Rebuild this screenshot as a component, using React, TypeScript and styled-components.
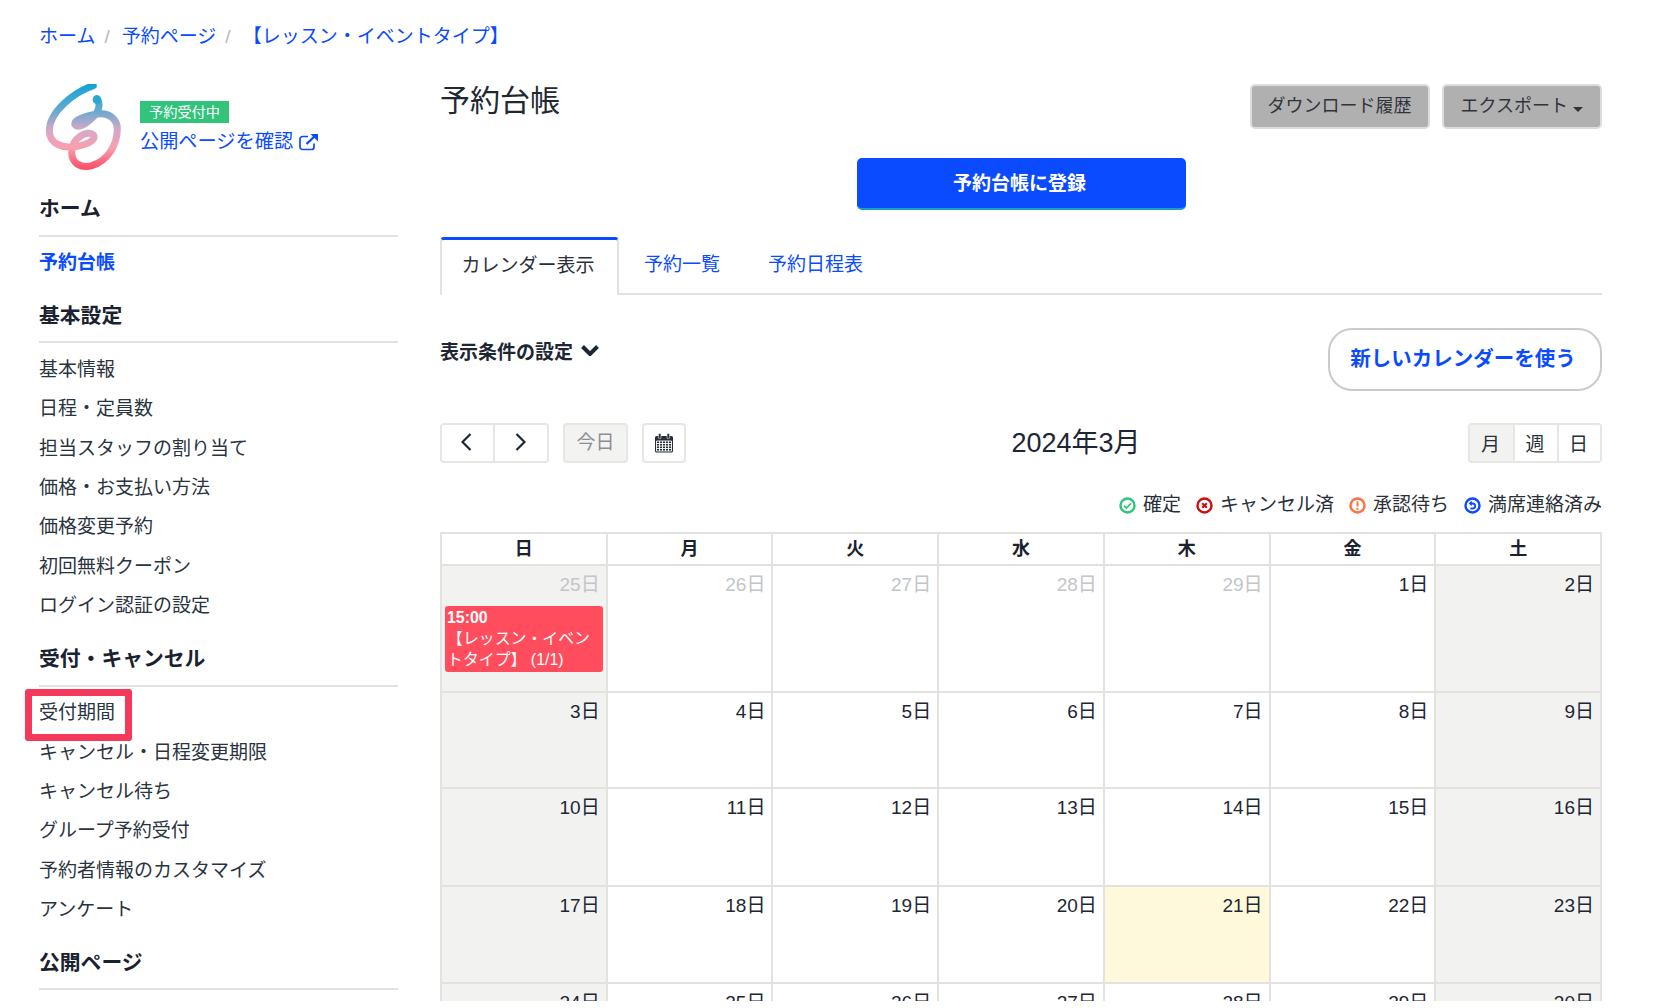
import React from 'react';
import styled, { createGlobalStyle } from 'styled-components';

const GlobalStyle = createGlobalStyle`
  * { box-sizing: border-box; }
  html, body { margin: 0; padding: 0; background: #fff; }
  body {
    font-family: "Liberation Sans", "Noto Sans CJK JP", sans-serif;
    font-size: 19px;
    color: #1d2634;
  }
`;

const BLUE = '#0a4bff';
const LINE = '#e2e2de';

const Page = styled.div`
  width: 1660px;
  height: 1001px;
  overflow: hidden;
  padding: 0 58px 0 39px;
`;

const Breadcrumb = styled.nav`
  height: 84px;
  padding-top: 23px;
  display: flex;
  line-height: 28px;
  color: ${BLUE};
`;

const Crumb = styled.a`
  color: ${BLUE};
`;

const Slash = styled.span`
  color: #b8b8b8;
  margin: 0 12px 0 9px;
  font-size: 19px;
`;

const Columns = styled.div`
  display: flex;
  gap: 42px;
  align-items: flex-start;
`;

const Sidebar = styled.aside`
  width: 359px;
  flex: none;
`;

const Brand = styled.div`
  height: 88px;
  display: flex;
  align-items: flex-start;
  margin-bottom: 17px;
`;

const LogoMark = styled.svg`
  width: 90px;
  height: 88px;
  margin: 0 11px 0 0;
  flex: none;
`;

const BrandText = styled.div`
  padding-top: 17px;
`;

const Badge = styled.span`
  display: block;
  width: 89px;
  height: 22px;
  line-height: 22px;
  text-align: center;
  font-size: 14.2px;
  color: #fff;
  background: #33c47c;
`;

const PublicLink = styled.a`
  display: flex;
  align-items: center;
  gap: 6px;
  color: ${BLUE};
  font-size: 19.2px;
  line-height: 26px;
  margin-top: 6px;
`;

const SectionTitle = styled.h3<{ $first?: boolean }>`
  margin: ${p => (p.$first ? 0 : 13.5)}px 0 6.5px;
  height: 47.5px;
  line-height: 40px;
  font-size: 20.8px;
  font-weight: 700;
  color: #1a2230;
  border-bottom: 2px solid ${LINE};
`;

const NavItem = styled.a<{ $active?: boolean; $marked?: boolean }>`
  display: block;
  position: relative;
  height: 39.4px;
  line-height: 39.4px;
  color: ${p => (p.$active ? BLUE : '#2a3340')};
  font-weight: ${p => (p.$active ? 700 : 400)};

  ${p => p.$marked && `
    &::after {
      content: '';
      box-sizing: border-box;
      position: absolute;
      left: -14px;
      top: -4px;
      width: 107px;
      height: 52px;
      border: 7px solid #f5395a;
      border-radius: 3px;
    }
  `}
`;

const Main = styled.main`
  width: 1162px;
  flex: none;
`;

const HeaderRow = styled.div`
  display: flex;
  justify-content: space-between;
  height: 60px;
`;

const PageTitle = styled.h1`
  margin: 0;
  font-size: 30px;
  line-height: 34px;
  font-weight: 400;
  color: #222831;
`;

const HeaderActions = styled.div`
  display: flex;
  gap: 12px;
`;

const GreyButton = styled.button<{ $pad?: number }>`
  height: 45px;
  padding: 0 ${p => p.$pad ?? 17}px 5px;
  display: flex;
  align-items: center;
  gap: 5px;
  font: inherit;
  font-size: 18px;
  color: #30343a;
  background: #b0b0b0;
  border: 2px solid #dcdcd8;
  border-radius: 5px;
`;

const Caret = styled.i`
  width: 0;
  height: 0;
  margin-top: 10px;
  border-left: 5px solid transparent;
  border-right: 5px solid transparent;
  border-top: 5px solid #30343a;
`;

const RegisterRow = styled.div`
  display: flex;
  justify-content: center;
  margin-top: 14px;
`;

const RegisterButton = styled.button`
  width: 329px;
  height: 52px;
  padding: 0 3px 4px 0;
  font: inherit;
  font-weight: 600;
  color: #fff;
  background: ${BLUE};
  border: 0;
  border-bottom: 2px solid #1aa0c0;
  border-radius: 5px;
`;

const Tabs = styled.div`
  display: flex;
  margin-top: 27px;
  height: 58px;
  border-bottom: 2px solid ${LINE};
`;

const Tab = styled.a<{ $active?: boolean }>`
  height: ${p => (p.$active ? 58 : 56)}px;
  line-height: ${p => (p.$active ? 52 : 56)}px;
  color: ${p => (p.$active ? '#2a3038' : BLUE)};
  ${p => p.$active
    ? `
    width: 179px;
    padding-right: 3px;
    text-align: center;
    margin-right: 25px;
    background: #fff;
    border: 2px solid ${LINE};
    border-top: 3px solid ${BLUE};
    border-bottom: 0;
    border-radius: 4px 4px 0 0;
  `
    : 'margin-right: 48px;'}
`;

const FilterRow = styled.div`
  display: flex;
  justify-content: space-between;
  margin-top: 33px;
`;

const FilterToggle = styled.a`
  display: flex;
  align-items: center;
  gap: 8px;
  height: 44px;
  font-weight: 700;
  color: #1d2634;
`;

const PillButton = styled.button`
  width: 274px;
  height: 63px;
  padding: 0 4px 6px 0;
  font: inherit;
  font-size: 20.5px;
  font-weight: 700;
  color: ${BLUE};
  background: #fff;
  border: 2px solid #c9ccc8;
  border-radius: 24px;
`;

const Toolbar = styled.div`
  display: grid;
  grid-template-columns: 1fr auto 1fr;
  align-items: center;
  margin-top: 32px;
  height: 40px;
`;

const ToolGroup = styled.div`
  display: flex;
  gap: 14px;
`;

const Segmented = styled.div`
  display: flex;
  justify-self: end;
  border: 2px solid #e6e6e2;
  border-radius: 4px;
  overflow: hidden;
`;

const Segment = styled.button<{ $on?: boolean; $w: number; $last?: boolean }>`
  width: ${p => p.$w}px;
  height: 36px;
  padding: 0 2px 2px 0;
  display: flex;
  align-items: center;
  justify-content: center;
  font: inherit;
  color: #2a3038;
  background: ${p => (p.$on ? '#f2f2f0' : '#fff')};
  border: 0;
  border-right: ${p => (p.$last ? '0' : '2px solid #e6e6e2')};
`;

const ToolButton = styled.button<{ $muted?: boolean; $w: number }>`
  width: ${p => p.$w}px;
  height: 40px;
  padding: 0 0 ${p => (p.$muted ? 5 : 0)}px;
  display: flex;
  align-items: center;
  justify-content: center;
  font: inherit;
  color: #8b8f94;
  background: ${p => (p.$muted ? '#f3f3f1' : '#fff')};
  border: 2px solid #e6e6e2;
  border-radius: 4px;
`;

const MonthTitle = styled.div`
  font-size: 27px;
  line-height: 40px;
  color: #1d2634;
  transform: translateX(55px);
`;

const Legend = styled.div`
  display: flex;
  justify-content: flex-end;
  gap: 15px;
  margin-top: 28px;
  height: 28px;
  line-height: 28px;
`;

const LegendItem = styled.span`
  display: flex;
  align-items: center;
  gap: 7px;
  color: #2a3038;
`;

const Calendar = styled.div`
  display: grid;
  grid-template-columns: repeat(7, 1fr);
  grid-template-rows: 32px 127px 96px 98px 97px 97px;
  margin-top: 13px;
  border-top: 2px solid ${LINE};
  border-left: 2px solid ${LINE};
`;

const HeadCell = styled.div`
  line-height: 30px;
  text-align: center;
  font-size: 18px;
  font-weight: 700;
  color: #1a2230;
  border-right: 2px solid ${LINE};
  border-bottom: 2px solid ${LINE};
`;

const DayCell = styled.div<{ $tone: string }>`
  padding: 8px 3px 0 3px;
  background: ${p => p.$tone};
  border-right: 2px solid ${LINE};
  border-bottom: 2px solid ${LINE};
`;

const DayNumber = styled.div<{ $faded?: boolean }>`
  height: 22px;
  line-height: 22px;
  padding-right: 3px;
  text-align: right;
  font-size: 19px;
  color: ${p => (p.$faded ? '#c3c5c8' : '#1d2634')};
`;

const EventCard = styled.div`
  margin-top: 10px;
  height: 66px;
  padding: 1px 2px;
  font-size: 15.9px;
  line-height: 21px;
  color: #fff;
  background: #ff4d5e;
  border-radius: 3px;
`;

const EventTime = styled.div`
  font-weight: 700;
`;

const Logo = () => (
  <LogoMark viewBox="27 45 270 264">
    <defs>
      <linearGradient id="swirl" gradientUnits="userSpaceOnUse" x1="0" y1="45" x2="0" y2="300">
        <stop offset="0" stopColor="#10a4d6" />
        <stop offset="0.3" stopColor="#62a9d0" />
        <stop offset="0.55" stopColor="#d8a8c8" />
        <stop offset="0.75" stopColor="#f7a0ae" />
        <stop offset="1" stopColor="#fb4d66" />
      </linearGradient>
    </defs>
    <path
      d="M190 50C130 70 58 130 58 185C58 225 100 240 140 232C175 226 200 212 190 197C175 182 125 205 125 250C125 285 155 298 185 290C235 275 262 225 262 180C262 150 235 130 205 135C170 140 130 152 135 167C145 182 195 150 205 120C210 105 205 95 200 90"
      fill="none"
      stroke="url(#swirl)"
      strokeWidth="21"
      strokeLinecap="round"
    />
    <circle cx="201" cy="92" r="13" fill="#2aa6d4" />
  </LogoMark>
);

const ExternalIcon = () => (
  <svg width="20" height="18" viewBox="0 0 20 18" fill="none" stroke={BLUE}>
    <path d="M15 10.5V14a2.5 2.5 0 0 1-2.5 2.5H3.5A2.5 2.5 0 0 1 1 14V6a2.5 2.5 0 0 1 2.5-2.5H9" strokeWidth="1.7" />
    <path d="M7.5 11L17 2" strokeWidth="2.4" />
    <path d="M11.5 1h7.5v7.5z" fill={BLUE} stroke="none" />
  </svg>
);

const ChevronDown = () => (
  <svg width="18" height="11" viewBox="0 0 18 11" fill="none" stroke="#1d2634" strokeWidth="4">
    <path d="M1.5 1.5L9 9l7.5-7.5" />
  </svg>
);

const ChevronSide = ({ flip }: { flip?: boolean }) => (
  <svg width="11" height="18" viewBox="0 0 11 18" fill="none" stroke="#1d2634" strokeWidth="2.2">
    <path d={flip ? 'M1.5 1L9.5 9l-8 8' : 'M9.5 1L1.5 9l8 8'} />
  </svg>
);

const CalendarIcon = () => (
  <svg width="18" height="20" viewBox="0 0 18 20">
    <path d="M1.5 3h15A1.5 1.5 0 0 1 18 4.5V18a1.5 1.5 0 0 1-1.5 1.5h-15A1.5 1.5 0 0 1 0 18V4.5A1.5 1.5 0 0 1 1.5 3z" fill="#2a3038" />
    <rect x="3.4" y="0.5" width="2.6" height="5" rx="1" fill="#2a3038" stroke="#fff" strokeWidth="0.6" />
    <rect x="12" y="0.5" width="2.6" height="5" rx="1" fill="#2a3038" stroke="#fff" strokeWidth="0.6" />
    <path
      d="M1.5 8h15v10h-15zM1.5 10.5h15M1.5 13h15M1.5 15.5h15M4.5 8v10M7.5 8v10M10.5 8v10M13.5 8v10"
      fill="none"
      stroke="#fff"
      strokeWidth="0.9"
    />
  </svg>
);

const StatusIcon = ({ kind }: { kind: string }) => {
  const colors: Record<string, string> = { ok: '#2fc57a', cancel: '#c81212', wait: '#ff7043', full: BLUE };
  const color = colors[kind];
  return (
    <svg width="17" height="17" viewBox="0 0 17 17" fill="none" stroke={color}>
      <circle cx="8.5" cy="8.5" r="7" strokeWidth="2.4" />
      {kind === 'ok' && <path d="M5 8.7l2.4 2.4L12 6.3" strokeWidth="1.7" />}
      {kind === 'cancel' && <path d="M6.2 6.2l4.6 4.6M10.8 6.2l-4.6 4.6" strokeWidth="2.2" />}
      {kind === 'wait' && <path d="M8.5 4.4v5M8.5 10.8v2" strokeWidth="2" />}
      {kind === 'full' && (
        <>
          <path d="M6 6.5h2.6a2.6 2.6 0 0 1 2.6 2.6 2.6 2.6 0 0 1-2.6 2.4H6.5" strokeWidth="1.8" />
          <path d="M7.8 3.8L4.6 6.5l3.2 2.6z" fill={color} stroke="none" />
        </>
      )}
    </svg>
  );
};

const navGroups = [
  { title: '基本設定', items: ['基本情報', '日程・定員数', '担当スタッフの割り当て', '価格・お支払い方法', '価格変更予約', '初回無料クーポン', 'ログイン認証の設定'] },
  { title: '受付・キャンセル', items: ['受付期間', 'キャンセル・日程変更期限', 'キャンセル待ち', 'グループ予約受付', '予約者情報のカスタマイズ', 'アンケート'] },
];

const weekdays = ['日', '月', '火', '水', '木', '金', '土'];
const days = [
  25, 26, 27, 28, 29, 1, 2,
  3, 4, 5, 6, 7, 8, 9,
  10, 11, 12, 13, 14, 15, 16,
  17, 18, 19, 20, 21, 22, 23,
  24, 25, 26, 27, 28, 29, 30,
];

const legend = [
  { kind: 'ok', label: '確定' },
  { kind: 'cancel', label: 'キャンセル済' },
  { kind: 'wait', label: '承認待ち' },
  { kind: 'full', label: '満席連絡済み' },
];

const App: React.FC = () => {
  return (
    <Page>
      <GlobalStyle />
      <Breadcrumb>
        <Crumb>ホーム</Crumb>
        <Slash>/</Slash>
        <Crumb>予約ページ</Crumb>
        <Slash>/</Slash>
        <Crumb>【レッスン・イベントタイプ】</Crumb>
      </Breadcrumb>
      <Columns>
        <Sidebar>
          <Brand>
            <Logo />
            <BrandText>
              <Badge>予約受付中</Badge>
              <PublicLink>
                公開ページを確認
                <ExternalIcon />
              </PublicLink>
            </BrandText>
          </Brand>
          <SectionTitle $first>ホーム</SectionTitle>
          <NavItem $active>予約台帳</NavItem>
          {navGroups.map(group => (
            <React.Fragment key={group.title}>
              <SectionTitle>{group.title}</SectionTitle>
              {group.items.map(item => (
                <NavItem key={item} $marked={item === '受付期間'}>{item}</NavItem>
              ))}
            </React.Fragment>
          ))}
          <SectionTitle>公開ページ</SectionTitle>
        </Sidebar>
        <Main>
          <HeaderRow>
            <PageTitle>予約台帳</PageTitle>
            <HeaderActions>
              <GreyButton $pad={16}>ダウンロード履歴</GreyButton>
              <GreyButton>
                エクスポート
                <Caret />
              </GreyButton>
            </HeaderActions>
          </HeaderRow>
          <RegisterRow>
            <RegisterButton>予約台帳に登録</RegisterButton>
          </RegisterRow>
          <Tabs>
            <Tab $active>カレンダー表示</Tab>
            <Tab>予約一覧</Tab>
            <Tab>予約日程表</Tab>
          </Tabs>
          <FilterRow>
            <FilterToggle>
              表示条件の設定
              <ChevronDown />
            </FilterToggle>
            <PillButton>新しいカレンダーを使う</PillButton>
          </FilterRow>
          <Toolbar>
            <ToolGroup>
              <Segmented>
                <Segment $w={53}><ChevronSide /></Segment>
                <Segment $w={52} $last><ChevronSide flip /></Segment>
              </Segmented>
              <ToolButton $muted $w={65}>今日</ToolButton>
              <ToolButton $w={44}><CalendarIcon /></ToolButton>
            </ToolGroup>
            <MonthTitle>2024年3月</MonthTitle>
            <Segmented>
              <Segment $on $w={45}>月</Segment>
              <Segment $w={44}>週</Segment>
              <Segment $w={41} $last>日</Segment>
            </Segmented>
          </Toolbar>
          <Legend>
            {legend.map(entry => (
              <LegendItem key={entry.kind}>
                <StatusIcon kind={entry.kind} />
                {entry.label}
              </LegendItem>
            ))}
          </Legend>
          <Calendar>
            {weekdays.map(day => (
              <HeadCell key={day}>{day}</HeadCell>
            ))}
            {days.map((day, i) => {
              const weekend = i % 7 === 0 || i % 7 === 6;
              const tone = day === 21 ? '#fff9dc' : weekend ? '#f2f2f0' : '#fff';
              return (
                <DayCell key={i} $tone={tone}>
                  <DayNumber $faded={i < 5}>{day}日</DayNumber>
                  {i === 0 && (
                    <EventCard>
                      <EventTime>15:00</EventTime>
                      【レッスン・イベントタイプ】 (1/1)
                    </EventCard>
                  )}
                </DayCell>
              );
            })}
          </Calendar>
        </Main>
      </Columns>
    </Page>
  );
};

export default App;
